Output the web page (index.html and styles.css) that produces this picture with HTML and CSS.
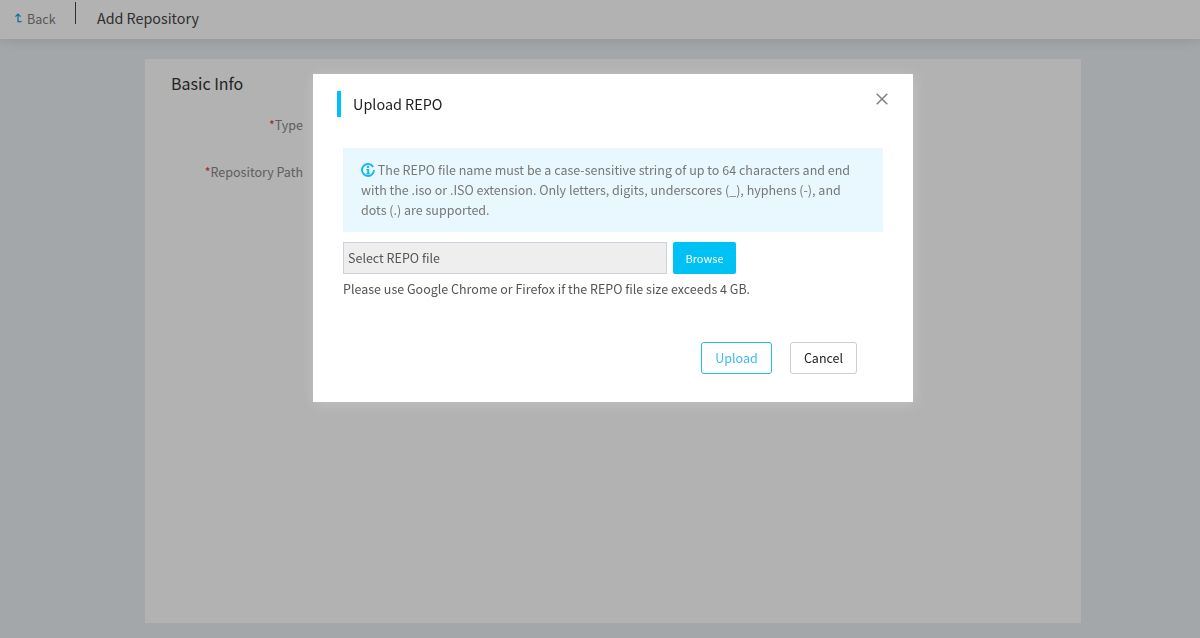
FILE: index.html
```html
<!DOCTYPE html>
<html lang="en">
<head>
<meta charset="utf-8">
<title>Add Repository</title>
<link rel="stylesheet" href="styles.css">
</head>
<body>
<header class="topbar">
  <a class="back"><svg class="back-icon" width="7" height="10" viewBox="0 0 7 10"><path d="M0.4 3.6 3 1l2.6 2.6M3 1v7.6h3.6" fill="none" stroke="currentColor" stroke-width="1.2"/></svg>Back</a>
  <span class="divider"></span>
  <h1 class="page-title">Add Repository</h1>
</header>
<main class="content">
  <section class="card">
    <h2 class="card-title">Basic Info</h2>
    <div class="field field-type"><span class="req">*</span>Type</div>
    <div class="field field-path"><span class="req">*</span>Repository Path</div>
  </section>
</main>
<div class="overlay"></div>
<div class="modal">
  <div class="modal-head">
    <h3 class="modal-title">Upload REPO</h3>
    <svg class="close" width="12" height="12" viewBox="0 0 12 12"><path d="M.7.7l10.6 10.6M11.3.7.7 11.3" stroke="currentColor" stroke-width="1.5" fill="none"/></svg>
  </div>
  <div class="notice"><svg class="info" width="14" height="14" viewBox="0 0 14 14"><path d="M12.2 4A6 6 0 1 0 13 7" fill="none" stroke="currentColor" stroke-width="1.9"/><circle cx="7" cy="3.9" r="1.2" fill="currentColor"/><path d="M5.3 6h2.9v4.3h.9v1.2H5.2v-1.2h1V7.2h-.9z" fill="currentColor"/></svg> The REPO file name must be a case-sensitive string of up to 64 characters and end with the .iso or .ISO extension. Only letters, digits, underscores (_), hyphens (-), and dots (.) are supported.</div>
  <div class="file-row">
    <div class="file-input">Select REPO file</div>
    <button class="browse">Browse</button>
  </div>
  <p class="hint">Please use Google Chrome or Firefox if the REPO file size exceeds 4 GB.</p>
  <div class="actions">
    <button class="btn btn-primary">Upload</button>
    <button class="btn btn-plain">Cancel</button>
  </div>
</div>
</body>
</html>
```
FILE: styles.css
```css
* { box-sizing: border-box; }
html, body { margin: 0; height: 638px; overflow: hidden; }
body {
  background: #eaf0f4;
  font-family: "Noto Sans CJK SC", "Noto Sans", sans-serif;
  font-size: 12.5px;
  color: #333;
  display: flex;
  flex-direction: column;
}
.topbar {
  height: 39px;
  background: #fff;
  box-shadow: 0 2px 12px rgba(0, 0, 0, .1);
  display: flex;
  align-items: flex-start;
  flex: none;
  position: relative;
}
.back {
  margin: 9px 0 0 15px;
  width: 60px;
  color: #808080;
  font-size: 12.5px;
  line-height: 19px;
  display: flex;
  align-items: center;
}
.back-icon { color: #05a5d8; margin-right: 5px; margin-top: -2px; }
.divider { width: 1px; height: 22px; margin-top: 2px; background: #444; }
.page-title {
  margin: 7px 0 0 21px;
  font-size: 14.3px;
  line-height: 21px;
  font-weight: 400;
  color: #444;
}
.content { flex: 1; padding: 20px 0 15px 26px; display: flex; justify-content: center; }
.card {
  width: 936px;
  background: #fff;
  padding: 12px 26px;
  color: #888;
}
.card-title { margin: 0; font-size: 16px; line-height: 24px; font-weight: 400; color: #333; }
.field { width: 132px; text-align: right; line-height: 19px; }
.field-type { margin-top: 20px; }
.field-path { margin-top: 28px; }
.req { color: #e0343f; }
.overlay { position: fixed; inset: 0; background: rgba(0, 0, 0, .3); }
.modal {
  position: absolute;
  left: 313px;
  top: 74px;
  width: 600px;
  height: 328px;
  background: #fff;
  box-shadow: 1px 2px 14px rgba(255, 255, 255, .22);
  padding: 17px 30px 0;
}
.modal-head { height: 57px; position: relative; }
.modal-title {
  margin: 0 0 0 -6px;
  height: 26px;
  border-left: 4px solid #00bfff;
  padding-left: 12px;
  font-size: 14.4px;
  line-height: 26px;
  font-weight: 400;
  color: #222;
}
.close { position: absolute; right: -5px; top: 2px; color: #808080; }
.notice {
  width: 540px;
  height: 84px;
  background: #e9f8fe;
  padding: 12px 18px;
  font-size: 12.5px;
  line-height: 20px;
  color: #777;
}
.info { color: #1cb8f0; vertical-align: -2px; }
.file-row { display: flex; gap: 6px; margin-top: 10px; }
.file-input {
  width: 324px;
  height: 32px;
  background: #eee;
  border: 1px solid #d0d0dc;
  padding-left: 4px;
  line-height: 30px;
  font-size: 12.5px;
  color: #555;
}
.browse {
  width: 63px;
  height: 32px;
  border: 0;
  border-radius: 2px;
  background: #00c1f3;
  color: #fff;
  font: 11px "Noto Sans CJK SC", "Noto Sans", sans-serif;
}
.hint { margin: 5px 0 0; line-height: 19px; font-size: 12.5px; color: #555; }
.actions { display: flex; gap: 18px; margin: 44px 0 0 358px; }
.btn {
  height: 32px;
  background: #fff;
  border-radius: 3px;
  font: 12.5px/28px "Noto Sans CJK SC", "Noto Sans", sans-serif;
  padding: 0 0 1px;
}
.btn-primary { width: 71px; border: 1px solid #1dbcf3; color: #3cbcf5; }
.btn-plain { width: 67px; border: 1px solid #ccccd6; color: #222; }
```
